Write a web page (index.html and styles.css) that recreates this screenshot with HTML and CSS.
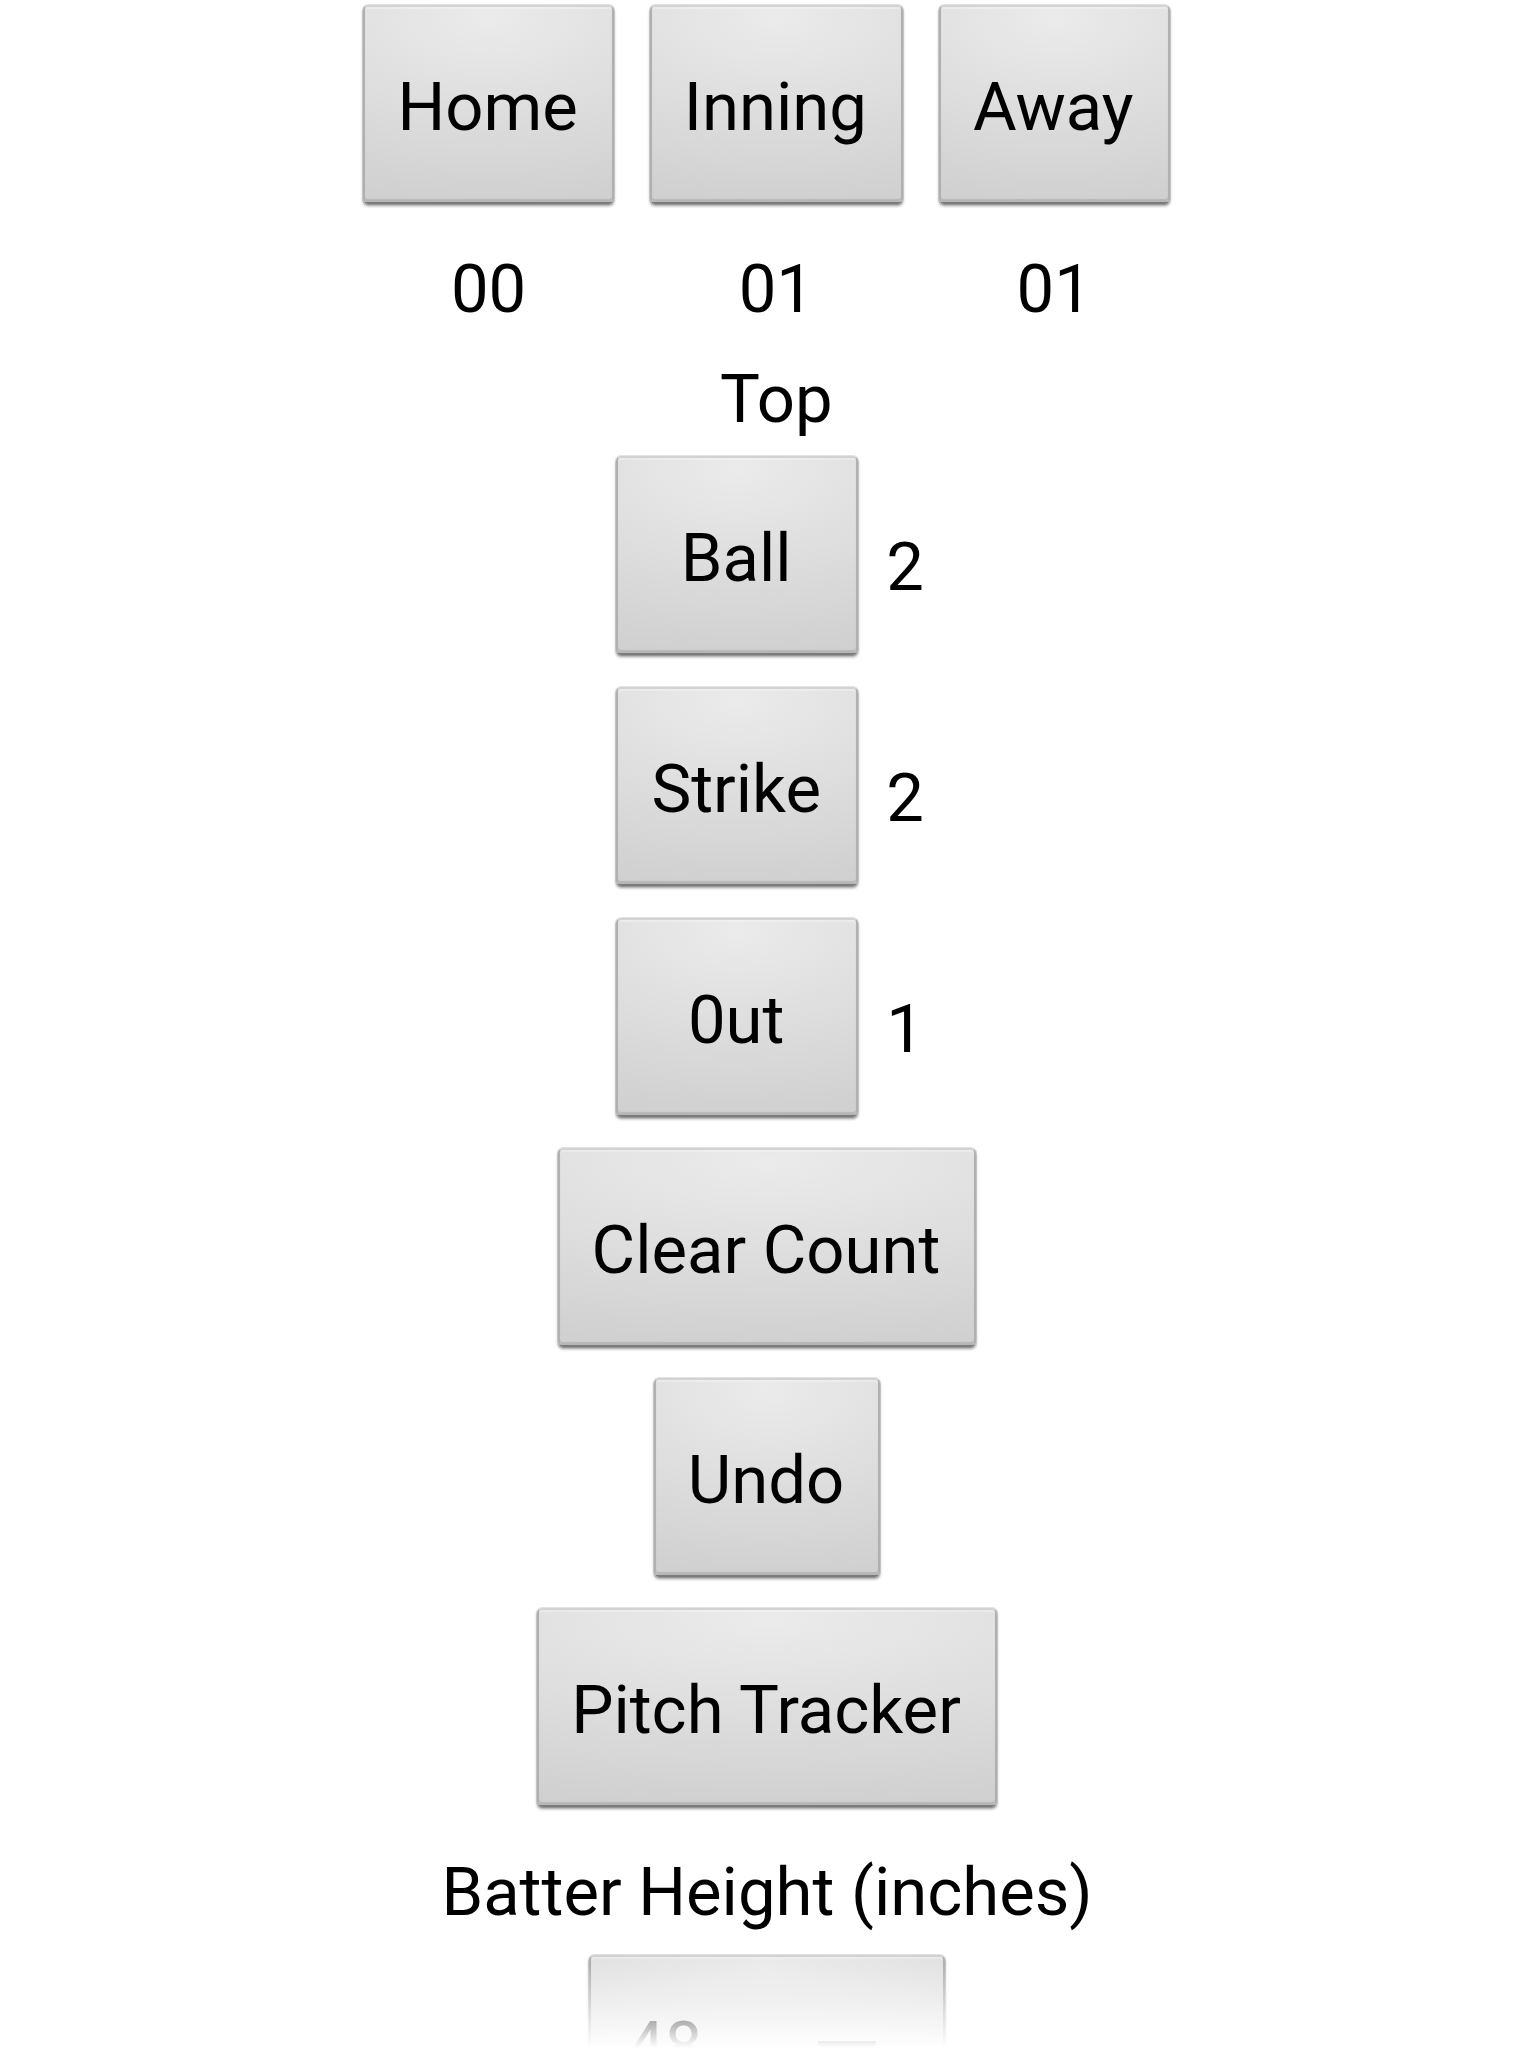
FILE: index.html
```html
<!DOCTYPE html>
<html lang="en">
<head>
<meta charset="utf-8">
<meta name="viewport" content="width=device-width, initial-scale=1">
<title>Umpire Counter</title>
<link rel="stylesheet" href="styles.css">
</head>
<body>
<main class="screen">
  <section class="scoreboard">
    <div class="column"><button class="btn" type="button">Home</button><output class="score">00</output></div>
    <div class="column"><button class="btn" type="button">Inning</button><output class="score">01</output><span class="half">Top</span></div>
    <div class="column"><button class="btn" type="button">Away</button><output class="score">01</output></div>
  </section>
  <section class="counts">
    <div class="count"><button class="btn" type="button">Ball</button><output class="tally">2</output></div>
    <div class="count"><button class="btn" type="button">Strike</button><output class="tally">2</output></div>
    <div class="count"><button class="btn" type="button">0ut</button><output class="tally">1</output></div>
  </section>
  <section class="actions">
    <button class="btn" type="button">Clear Count</button>
    <button class="btn" type="button">Undo</button>
    <button class="btn" type="button">Pitch Tracker</button>
  </section>
  <div class="height-field">
    <label for="height">Batter Height (inches)</label>
    <div class="picker">
      <select class="btn select" id="height"><option>48</option></select>
      <svg class="arrow" viewBox="0 0 60 30" aria-hidden="true"><path d="M0 0H60V3L32 29Q30 31 28 29L0 3Z"/></svg>
    </div>
  </div>
</main>
</body>
</html>
```
FILE: styles.css
```css
* { box-sizing: border-box; }

body {
  margin: 0;
  background: #fff;
  color: #000;
  font-family: Roboto, "Liberation Sans", sans-serif;
  font-size: 67px;
  line-height: 78px;
}

.screen {
  position: relative;
  display: flex;
  flex-direction: column;
  align-items: center;
  height: 100vh;
  overflow: hidden;
  padding-top: 5px;
}

/* fades out whatever continues below the fold */
.screen::after {
  content: "";
  position: absolute;
  inset: auto 0 0;
  height: 84px;
  background: linear-gradient(rgba(255, 255, 255, 0), #fff);
  pointer-events: none;
}

.scoreboard { display: flex; align-items: flex-start; gap: 36px; padding-right: 3px; }
.column { display: flex; flex-direction: column; align-items: center; }

.btn {
  flex: none;
  height: 199px;
  padding: 4px 34px 0 32px;
  border: 2px solid;
  border-color: #d2d2d2 #b0b0b0 #7c7c7c;
  border-radius: 5px;
  background: radial-gradient(ellipse 150% 95% at 50% 6%, #ebebeb, #d0d0d0) padding-box;
  box-shadow:
    inset 0 2px 1px rgba(255, 255, 255, .3),
    inset 0 -3px 1px rgba(0, 0, 0, .12),
    0 0 0 1px rgba(0, 0, 0, .1),
    0 2px 3px rgba(0, 0, 0, .4);
  color: #000;
  font: inherit;
}

.score { margin-top: 46px; }
.half { margin-top: 32px; }

.counts, .actions { display: flex; flex-direction: column; align-items: center; }
.counts { gap: 32px; margin-top: 18px; padding-left: 4px; }
.count { display: flex; align-items: center; gap: 28px; }
.count .btn { width: 242px; }
.tally { padding-top: 22px; }
.actions { gap: 31px; margin-top: 31px; padding-right: 2px; }

.height-field { display: flex; flex-direction: column; align-items: center; margin-top: 46px; padding-right: 2px; }
.picker { position: relative; margin-top: 24px; }
.select { width: 356px; height: 182px; padding: 0 36px; appearance: none; }
.arrow { position: absolute; top: 86px; right: 69px; width: 58px; fill: #111; }
```
